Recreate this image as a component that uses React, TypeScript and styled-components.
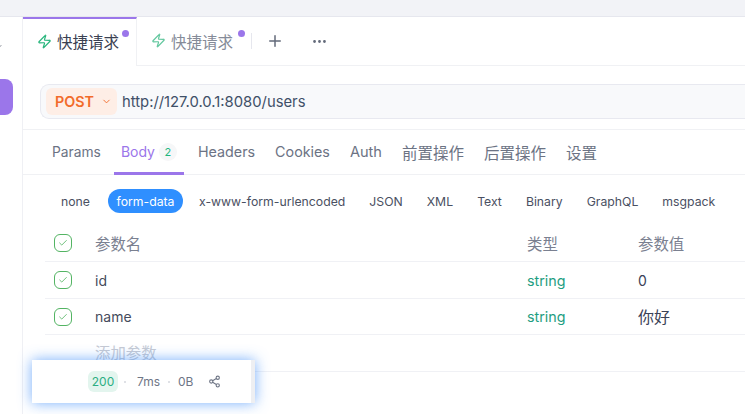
import React from "react";
import styled, { createGlobalStyle } from "styled-components";
import { ChevronDown, Ellipsis, Plus, Zap, Check } from "lucide-react";

const GlobalStyle = createGlobalStyle`
  html, body {
    margin: 0;
    padding: 0;
    background: #fff;
    overflow: hidden;
  }
  * {
    box-sizing: border-box;
  }
`;

const Page = styled.div`
  position: relative;
  width: 745px;
  height: 414px;
  overflow: hidden;
  font-family: Inter, "Noto Sans CJK SC", sans-serif;
  color: #3d4354;
`;

const TopBar = styled.div`
  height: 17px;
  background: #f2f3f7;
  border-bottom: 1px solid #e6e7ee;
`;

const Body = styled.div`
  display: flex;
  height: 397px;
`;

const Sidebar = styled.div`
  width: 23px;
  flex-shrink: 0;
  border-right: 1px solid #eff0f4;
  overflow: hidden;
  display: flex;
  flex-direction: column;
  align-items: flex-start;
`;

const SideChevron = styled.div`
  margin: 24px 0 0 -8px;
  height: 12px;
  color: #7f8491;
  display: flex;
`;

const SideButton = styled.div`
  margin-top: 26px;
  width: 13px;
  height: 36px;
  background: #9b76ea;
  border-radius: 0 8px 8px 0;
`;

const Main = styled.div`
  flex: 1;
  min-width: 0;
`;

const TabBar = styled.div`
  display: flex;
  align-items: stretch;
  height: 49px;
  border-bottom: 1px solid #f0f1f4;
`;

const Tab = styled.div<{ $active?: boolean }>`
  position: relative;
  display: flex;
  align-items: center;
  gap: 5px;
  height: ${(p) => (p.$active ? "49px" : "48px")};
  width: 114px;
  padding-left: 14px;
  padding-bottom: ${(p) => (p.$active ? "3px" : "1px")};
  font-size: 15.5px;
  color: ${(p) => (p.$active ? "#3a4152" : "#858b98")};
  background: #fff;
  border-top: ${(p) => (p.$active ? "2px solid #9b76ea" : "0")};
  border-right: ${(p) => (p.$active ? "1px solid #f0f1f4" : "0")};
  svg {
    color: ${(p) => (p.$active ? "#27b57c" : "#62c79e")};
  }
`;

const Dot = styled.span<{ $top: number; $left: number }>`
  position: absolute;
  top: ${(p) => p.$top}px;
  left: ${(p) => p.$left}px;
  width: 7px;
  height: 7px;
  border-radius: 50%;
  background: #9b76ea;
`;

const TabDivider = styled.div`
  width: 1px;
  height: 16px;
  background: #e6e7ee;
  align-self: center;
`;

const TabTool = styled.div<{ $gap: number }>`
  margin-left: ${(p) => p.$gap}px;
  align-self: center;
  display: flex;
  color: #636a7a;
`;

const UrlSection = styled.div`
  height: 64px;
  padding: 18px 0 0 17px;
  border-bottom: 1px solid #f0f1f4;
`;

const UrlBar = styled.div`
  display: flex;
  align-items: center;
  height: 35px;
  padding-left: 5px;
  background: #f8f9fb;
  border: 1px solid #e8e9f0;
  border-right: 0;
  border-radius: 9px 0 0 9px;
`;

const Method = styled.div`
  display: flex;
  align-items: center;
  gap: 7px;
  width: 71px;
  height: 27px;
  padding-left: 9px;
  background: #feeee6;
  border-radius: 6px;
  color: #f26b2a;
  font-size: 14.3px;
  font-weight: 600;
`;

const Url = styled.div`
  margin-left: 5px;
  font-size: 14.8px;
  color: #3f5068;
`;

const SubTabs = styled.div`
  display: flex;
  height: 45px;
  padding-left: 22px;
  border-bottom: 1px solid #f0f1f4;
`;

const SubTab = styled.div<{ $active?: boolean; $size?: number }>`
  position: relative;
  display: flex;
  align-items: center;
  gap: 4px;
  height: 44px;
  padding: 0 7px 1px;
  margin-right: ${(p) => (p.$active ? "7px" : "6px")};
  font-size: ${(p) => p.$size ?? 14}px;
  color: ${(p) => (p.$active ? "#9b76ea" : "#6c7384")};
  &::after {
    content: "";
    display: ${(p) => (p.$active ? "block" : "none")};
    position: absolute;
    left: 0;
    right: 0;
    bottom: -1px;
    height: 3px;
    background: #9b76ea;
  }
`;

const Count = styled.span`
  display: flex;
  align-items: center;
  justify-content: center;
  width: 18px;
  height: 18px;
  border-radius: 50%;
  background: #f6f7f8;
  color: #1fb67e;
  font-size: 11px;
`;

const BodyTypes = styled.div`
  display: flex;
  align-items: center;
  height: 52px;
  padding: 0 0 0 30px;
`;

const BodyType = styled.div<{ $active?: boolean }>`
  display: flex;
  align-items: center;
  height: 24px;
  padding: 0 ${(p) => (p.$active ? "8.5px" : "8px")};
  margin-left: ${(p) => (p.$active ? "2px" : "0")};
  margin-right: 8px;
  border-radius: 12px;
  font-size: 12.25px;
  background: ${(p) => (p.$active ? "#2f8fff" : "transparent")};
  color: ${(p) => (p.$active ? "#fff" : "#4a5062")};
`;

const Table = styled.div`
  margin-left: 22px;
`;

const Row = styled.div<{ $height: number; $head?: boolean }>`
  display: grid;
  grid-template-columns: 50px 432px 111px 1fr;
  align-items: center;
  height: ${(p) => p.$height}px;
  padding-bottom: ${(p) => (p.$head ? "2px" : "0")};
  border-bottom: 1px solid #f0f1f5;
  font-size: 14px;
`;

const CheckBox = styled.div`
  display: flex;
  align-items: center;
  justify-content: center;
  margin-left: 9px;
  width: 18px;
  height: 18px;
  border: 1px solid #53b463;
  border-radius: 6px;
  color: #53b463;
`;

const Head = styled.div`
  color: #7a8090;
  font-size: 15.4px;
`;

const Name = styled.div`
  color: #454b5c;
`;

const TypeCell = styled.div`
  color: #1f9e82;
  font-size: 14.3px;
`;

const Value = styled.div<{ $cjk?: boolean }>`
  color: #3a4257;
  font-size: ${(p) => (p.$cjk ? "16px" : "14px")};
  padding-bottom: ${(p) => (p.$cjk ? "2px" : "0")};
`;

const Placeholder = styled.div`
  color: #c6cad3;
  font-size: 15.4px;
  padding-bottom: 2px;
`;

const StatusPopup = styled.div`
  position: absolute;
  left: 32px;
  top: 360px;
  width: 223px;
  height: 43px;
  display: flex;
  align-items: center;
  padding-left: 56px;
  background: #fff;
  border-right: 4px solid #eeeff2;
  box-shadow: 0 0 14px rgba(60, 140, 250, 0.7);
  font-size: 12px;
  color: #6f7686;
`;

const StatusCode = styled.div`
  display: flex;
  align-items: center;
  justify-content: center;
  width: 30px;
  height: 21px;
  border-radius: 6px;
  background: #e3f5ee;
  color: #2bae82;
`;

const StatusDot = styled.span<{ $left: number; $right: number }>`
  width: 2px;
  height: 2px;
  margin: 0 ${(p) => p.$right}px 0 ${(p) => p.$left}px;
  background: #dfe1e6;
`;

const ShareIcon = styled.svg`
  margin-left: 15px;
  color: #6f7686;
`;

const bodyTypes = ["none", "form-data", "x-www-form-urlencoded", "JSON", "XML", "Text", "Binary", "GraphQL", "msgpack"];
const subTabs = [
  { label: "Headers", size: 14.3 },
  { label: "Cookies", size: 14.3 },
  { label: "Auth", size: 14.6 },
  { label: "前置操作", size: 15.5 },
  { label: "后置操作", size: 15.5 },
  { label: "设置", size: 15.5 },
];

const params = [
  { name: "id", value: "0", height: 37, cjk: false },
  { name: "name", value: "你好", height: 36, cjk: true },
];

function App() {
  return (
    <Page>
      <GlobalStyle />
      <TopBar />
      <Body>
        <Sidebar>
          <SideChevron>
            <ChevronDown size={12} />
          </SideChevron>
          <SideButton />
        </Sidebar>
        <Main>
          <TabBar>
            <Tab $active>
              <Zap size={15} strokeWidth={2} />
              快捷请求
              <Dot $top={11} $left={99} />
            </Tab>
            <Tab>
              <Zap size={15} strokeWidth={2} />
              快捷请求
              <Dot $top={13} $left={101} />
            </Tab>
            <TabDivider />
            <TabTool $gap={14}>
              <Plus size={18} />
            </TabTool>
            <TabTool $gap={27}>
              <Ellipsis size={17} />
            </TabTool>
          </TabBar>
          <UrlSection>
            <UrlBar>
              <Method>
                POST
                <ChevronDown size={11} />
              </Method>
              <Url>http://127.0.0.1:8080/users</Url>
            </UrlBar>
          </UrlSection>
          <SubTabs>
            <SubTab $size={13.8}>Params</SubTab>
            <SubTab $active>
              Body
              <Count>2</Count>
            </SubTab>
            {subTabs.map((t) => (
              <SubTab key={t.label} $size={t.size}>
                {t.label}
              </SubTab>
            ))}
          </SubTabs>
          <BodyTypes>
            {bodyTypes.map((t) => (
              <BodyType key={t} $active={t === "form-data"}>
                {t}
              </BodyType>
            ))}
          </BodyTypes>
          <Table>
            <Row $height={35} $head>
              <CheckBox>
                <Check size={10} />
              </CheckBox>
              <Head>参数名</Head>
              <Head>类型</Head>
              <Head>参数值</Head>
            </Row>
            {params.map((p) => (
              <Row key={p.name} $height={p.height}>
                <CheckBox>
                  <Check size={10} />
                </CheckBox>
                <Name>{p.name}</Name>
                <TypeCell>string</TypeCell>
                <Value $cjk={p.cjk}>{p.value}</Value>
              </Row>
            ))}
            <Row $height={37}>
              <span />
              <Placeholder>添加参数</Placeholder>
            </Row>
          </Table>
        </Main>
      </Body>
      <StatusPopup>
        <StatusCode>200</StatusCode>
        <StatusDot $left={6} $right={11} />
        7ms
        <StatusDot $left={8} $right={8} />
        0B
        <ShareIcon width="13" height="13" viewBox="0 0 24 24" fill="none" stroke="currentColor" strokeWidth="2">
          <circle cx="18" cy="5" r="3" />
          <circle cx="6" cy="12" r="3" />
          <circle cx="18" cy="19" r="3" />
          <path d="M8.6 13.5l6.8 4M15.4 6.5l-6.8 4" />
        </ShareIcon>
      </StatusPopup>
    </Page>
  );
}

export default App;
